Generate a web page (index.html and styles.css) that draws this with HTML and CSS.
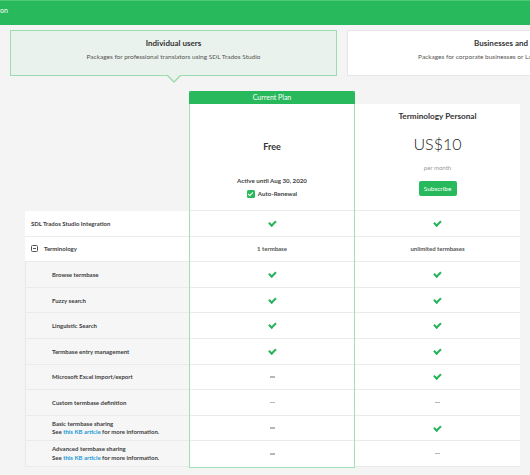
FILE: index.html
```html
<!DOCTYPE html>
<html lang="en">
<head>
    <meta charset="UTF-8">
    <meta name="viewport" content="width=device-width, initial-scale=1.0">
    <title>Subscription</title>
    <link rel="stylesheet" href="styles.css">
</head>
<body>
    <div class="top-bar"><span>on</span></div>

    <div class="tabs">
        <div class="tab active">
            <div class="tab-title">Individual users</div>
            <div class="tab-text">Packages for professional translators using SDL Trados Studio</div>
        </div>
        <div class="tab">
            <div class="tab-title">Businesses and LSPs</div>
            <div class="tab-text">Packages for corporate businesses or Language Service Providers</div>
        </div>
    </div>

    <div class="plans">
        <!-- feature names -->
        <div class="features">
            <div class="features-head"></div>
            <div class="row">SDL Trados Studio Integration</div>
            <div class="row group"><span class="toggle"></span>Terminology</div>
            <div class="row sub">Browse termbase</div>
            <div class="row sub">Fuzzy search</div>
            <div class="row sub">Linguistic Search</div>
            <div class="row sub">Termbase entry management</div>
            <div class="row sub">Microsoft Excel import/export</div>
            <div class="row sub">Custom termbase definition</div>
            <div class="row sub">
                <div class="row-text">Basic termbase sharing<br>See <a href="#">this KB article</a> for more information.</div>
            </div>
            <div class="row sub">
                <div class="row-text">Advanced termbase sharing<br>See <a href="#">this KB article</a> for more information.</div>
            </div>
        </div>

        <!-- current plan -->
        <div class="plan current">
            <div class="plan-badge">Current Plan</div>
            <div class="plan-head">
                <div class="plan-name">Free</div>
                <div class="plan-active">Active until Aug 30, 2020</div>
                <div class="plan-renew"><span class="checkbox"></span>Auto-Renewal</div>
            </div>
            <div class="cell"><span class="check"></span></div>
            <div class="cell value">1 termbase</div>
            <div class="cell"><span class="check"></span></div>
            <div class="cell"><span class="check"></span></div>
            <div class="cell"><span class="check"></span></div>
            <div class="cell"><span class="check"></span></div>
            <div class="cell"><span class="dash"></span></div>
            <div class="cell"><span class="dash"></span></div>
            <div class="cell"><span class="dash"></span></div>
            <div class="cell"><span class="dash"></span></div>
        </div>

        <!-- paid plan -->
        <div class="plan">
            <div class="plan-head">
                <div class="plan-title">Terminology Personal</div>
                <div class="plan-price">US$10</div>
                <div class="plan-period">per month</div>
                <button class="subscribe">Subscribe</button>
            </div>
            <div class="cell"><span class="check"></span></div>
            <div class="cell value">unlimited termbases</div>
            <div class="cell"><span class="check"></span></div>
            <div class="cell"><span class="check"></span></div>
            <div class="cell"><span class="check"></span></div>
            <div class="cell"><span class="check"></span></div>
            <div class="cell"><span class="check"></span></div>
            <div class="cell"><span class="dash"></span></div>
            <div class="cell"><span class="check"></span></div>
            <div class="cell"><span class="dash"></span></div>
        </div>
    </div>
</body>
</html>
```

FILE: styles.css
```css
html {
    overflow: hidden;
}
body {
    margin: 0;
    background: #f4f4f4;
    font-family: Lato, "Open Sans", sans-serif;
    color: #333;
}
.top-bar {
    height: 25px;
    background: #27b95b;
    border-top: 1px solid #4fca79;
    box-sizing: border-box;
    color: #fff;
    font-size: 7px;
    line-height: 19px;
}
.tabs {
    display: flex;
    gap: 10px;
    padding: 5px 0 0 10px;
}
.tab {
    flex: 0 0 327px;
    height: 46px;
    box-sizing: border-box;
    background: #fff;
    border: 1px solid #e6e6e6;
    text-align: center;
    position: relative;
}
.tab.active {
    background: #e9f2ec;
    border-color: #9adcae;
}
.tab.active::before,
.tab.active::after {
    content: "";
    position: absolute;
    left: 50%;
    border-style: solid;
    border-color: transparent;
}
.tab.active::before {
    top: 100%;
    margin-left: -8px;
    border-width: 8px 8px 0 8px;
    border-top-color: #9adcae;
}
.tab.active::after {
    top: 100%;
    margin-left: -7px;
    margin-top: -1px;
    border-width: 7px 7px 0 7px;
    border-top-color: #e9f2ec;
}
.tab-title {
    margin-top: 6px;
    font-size: 8px;
    font-weight: bold;
    line-height: 12px;
    color: #333;
}
.tab-text {
    margin-top: 3px;
    font-size: 6.5px;
    line-height: 9px;
    color: #555;
}
.plans {
    display: flex;
    align-items: flex-start;
    margin: 15px 0 0 25px;
}
.features {
    width: 164px;
}
.features-head {
    height: 120px;
}
.row,
.cell {
    height: 25.6px;
    box-sizing: border-box;
    border-bottom: 1px solid #ebebeb;
    display: flex;
    align-items: center;
    font-size: 6px;
    font-weight: bold;
}
.row {
    padding-left: 6px;
    background: #fff;
    color: #3d3d3d;
}
.row.sub {
    padding-left: 26px;
    background: #f6f6f6;
    border-left: 1px solid #e8e8e8;
}
.row-text {
    line-height: 8.4px;
}
.row a {
    color: #1a9ad6;
    text-decoration: none;
}
.toggle {
    width: 7px;
    height: 7px;
    box-sizing: border-box;
    border: 1px solid #555;
    border-radius: 1.5px;
    margin-right: 6px;
    position: relative;
}
.toggle::after {
    content: "";
    position: absolute;
    left: 1px;
    top: 2px;
    width: 3px;
    height: 1px;
    background: #555;
}
.plan {
    width: 165px;
    margin-top: 13px;
    background: #fff;
}
.plan.current {
    width: 166px;
    margin-top: 0;
    box-sizing: border-box;
    border: 1px solid #9fdfb3;
    border-top: none;
}
.plan-badge {
    margin: 0 -1px;
    height: 13px;
    background: #27b95b;
    border-radius: 2px 2px 0 0;
    color: #fff;
    font-size: 7px;
    line-height: 13px;
    text-align: center;
}
.plan-head {
    height: 107px;
    box-sizing: border-box;
    border-bottom: 1px solid #ebebeb;
    display: flex;
    flex-direction: column;
    align-items: center;
}
.plan-name {
    margin-top: 37px;
    font-size: 9px;
    font-weight: bold;
    line-height: 12px;
}
.plan-active {
    margin-top: 23px;
    font-size: 6.2px;
    font-weight: bold;
    line-height: 9px;
    color: #444;
}
.plan-renew {
    margin-top: 4px;
    display: flex;
    align-items: center;
    font-size: 6.2px;
    font-weight: bold;
    line-height: 9px;
    color: #444;
}
.checkbox {
    width: 8px;
    height: 8px;
    margin-right: 3px;
    border-radius: 1.5px;
    background: #27b95b;
    position: relative;
}
.checkbox::after {
    content: "";
    position: absolute;
    left: 2.6px;
    top: 1px;
    width: 2px;
    height: 4px;
    border: solid #fff;
    border-width: 0 1.3px 1.3px 0;
    transform: rotate(45deg);
}
.plan-title {
    margin-top: 6px;
    font-size: 8.2px;
    line-height: 12px;
    font-weight: bold;
}
.plan-price {
    margin-top: 12px;
    font-size: 16px;
    font-weight: 300;
    line-height: 20px;
    color: #222;
}
.plan-period {
    margin-top: 9px;
    font-size: 6px;
    line-height: 10px;
    color: #999;
}
.subscribe {
    margin-top: 8px;
    width: 38px;
    height: 15px;
    padding: 0;
    border: none;
    border-radius: 2px;
    background: #27b95b;
    color: #fff;
    font-family: inherit;
    font-size: 6.5px;
}
.cell {
    justify-content: center;
    color: #555;
}
.plan.current .cell:last-child {
    border-bottom: none;
}
.check {
    width: 2.5px;
    height: 5px;
    margin-top: -2px;
    border: solid #27b35a;
    border-width: 0 2px 2px 0;
    transform: rotate(45deg);
}
.dash {
    width: 5px;
    height: 1.5px;
    background: #b3b7bf;
}
```
